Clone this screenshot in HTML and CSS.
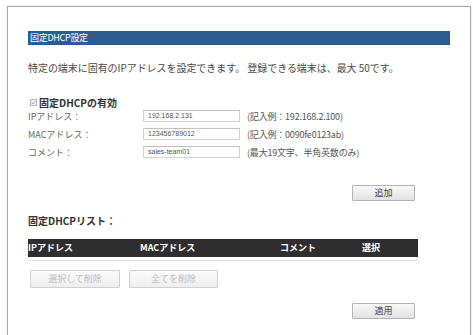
FILE: index.html
```html
<!DOCTYPE html>
<html lang="ja">
<head>
<meta charset="utf-8">
<title>固定DHCP設定</title>
<link rel="stylesheet" href="styles.css">
</head>
<body>
<div class="frame">
  <div class="title-bar">固定DHCP設定</div>
  <div class="content">
    <p class="desc">特定の端末に固有のIPアドレスを設定できます。 登録できる端末は、最大 50です。</p>
    <div class="enable-row">
      <span class="check"><svg width="7" height="7" viewBox="0 0 7 7"><rect x="0.5" y="0.5" width="6" height="6" fill="#f4f4f4" stroke="#bbb"/><path d="M1.5 3.6 L3 5 L5.6 1.8" fill="none" stroke="#aaa" stroke-width="1"/></svg></span>
      <span class="enable-label">固定DHCPの有効</span>
    </div>
    <div class="rows">
      <div class="row">
        <span class="label">IPアドレス：</span>
        <span class="input">192.168.2.131</span>
        <span class="hint">(記入例：192.168.2.100)</span>
      </div>
      <div class="row">
        <span class="label">MACアドレス：</span>
        <span class="input">123456789012</span>
        <span class="hint">(記入例：0090fe0123ab)</span>
      </div>
      <div class="row">
        <span class="label">コメント：</span>
        <span class="input">sales-team01</span>
        <span class="hint">(最大19文字、半角英数のみ)</span>
      </div>
    </div>
    <div class="btn-line">
      <button class="btn">追加</button>
    </div>
    <div class="list-title">固定DHCPリスト：</div>
    <div class="table">
      <div class="thead">
        <span class="c1">IPアドレス</span>
        <span class="c2">MACアドレス</span>
        <span class="c3">コメント</span>
        <span class="c4">選択</span>
      </div>
      <div class="tbody"></div>
    </div>
    <div class="del-line">
      <button class="btn disabled wide1">選択して削除</button>
      <button class="btn disabled wide2">全てを削除</button>
    </div>
    <div class="btn-line apply">
      <button class="btn">適用</button>
    </div>
  </div>
</div>
</body>
</html>
```

FILE: styles.css
```css
html, body {
  margin: 0;
  padding: 0;
  background: #ffffff;
}
body {
  font-family: "Noto Sans CJK JP", "Noto Sans", sans-serif;
  color: #444;
  font-size: 10px;
}
.frame {
  margin: 6px 0 0 7px;
  width: 464px;
  height: 340px;
  border: 1px solid #a8a8a8;
  box-sizing: border-box;
  padding: 24px 20px 0 20px;
  box-shadow: 0 0 2px rgba(0,0,0,0.15);
}
.title-bar {
  height: 14px;
  line-height: 14px;
  background: #2c5d91;
  color: #ffffff;
  font-size: 9px;
  padding-left: 2px;
  letter-spacing: -0.3px;
}
.content {
  width: 390px;
}
.desc {
  margin: 16px 0 0 0;
  line-height: 14px;
  font-size: 10px;
  color: #4a4a4a;
  white-space: nowrap;
  letter-spacing: -0.05px;
}
.enable-row {
  margin-top: 22px;
  height: 11px;
  display: flex;
  align-items: center;
  padding-left: 2px;
}
.check {
  display: flex;
  width: 8px;
  margin-right: 1px;
}
.enable-label {
  font-weight: bold;
  font-size: 10px;
  line-height: 11px;
  color: #333;
}
.rows {
  display: flex;
  flex-direction: column;
  gap: 2px;
}
.row {
  height: 16px;
  display: flex;
  align-items: center;
}
.label {
  width: 115px;
  font-size: 9px;
  color: #666;
}
.input {
  width: 97px;
  height: 12px;
  box-sizing: border-box;
  border: 1px solid #d2d2d2;
  border-top-color: #c2c2c2;
  font-size: 7px;
  line-height: 10px;
  padding-left: 4px;
  color: #555;
  font-family: "Liberation Sans", sans-serif;
}
.hint {
  margin-left: 7px;
  font-size: 9px;
  color: #555;
  letter-spacing: -0.2px;
}
.btn-line {
  display: flex;
  justify-content: flex-end;
  margin-top: 25px;
  padding-right: 3px;
}
.btn {
  width: 63px;
  height: 16px;
  margin: 0;
  padding: 0;
  border: 1px solid #b4b4b4;
  border-radius: 1px;
  background: linear-gradient(#f8f8f8, #e2e2e2);
  font-family: "Noto Sans CJK JP", sans-serif;
  font-size: 9px;
  color: #444;
  line-height: 14px;
}
.list-title {
  margin-top: 14px;
  line-height: 12px;
  font-weight: bold;
  font-size: 10px;
  color: #333;
}
.table {
  margin-top: 12px;
}
.thead {
  height: 18px;
  background: #2e2e2e;
  display: grid;
  grid-template-columns: 112px 140px 82px 1fr;
  align-items: center;
  color: #ffffff;
  font-weight: bold;
  font-size: 9px;
  line-height: 18px;
}
.thead span {
  white-space: nowrap;
}
.tbody {
  height: 3px;
  border-bottom: 1px solid #e6e6e6;
}
.del-line {
  margin-top: 9px;
  display: flex;
  gap: 9px;
  padding-left: 2px;
}
.btn.disabled {
  height: 18px;
  color: #bdbdbd;
  border-color: #d0d0d0;
  background: linear-gradient(#fbfbfb, #eeeeee);
}
.wide1 {
  width: 90px;
}
.wide2 {
  width: 89px;
}
.apply {
  margin-top: 15px;
}
```
